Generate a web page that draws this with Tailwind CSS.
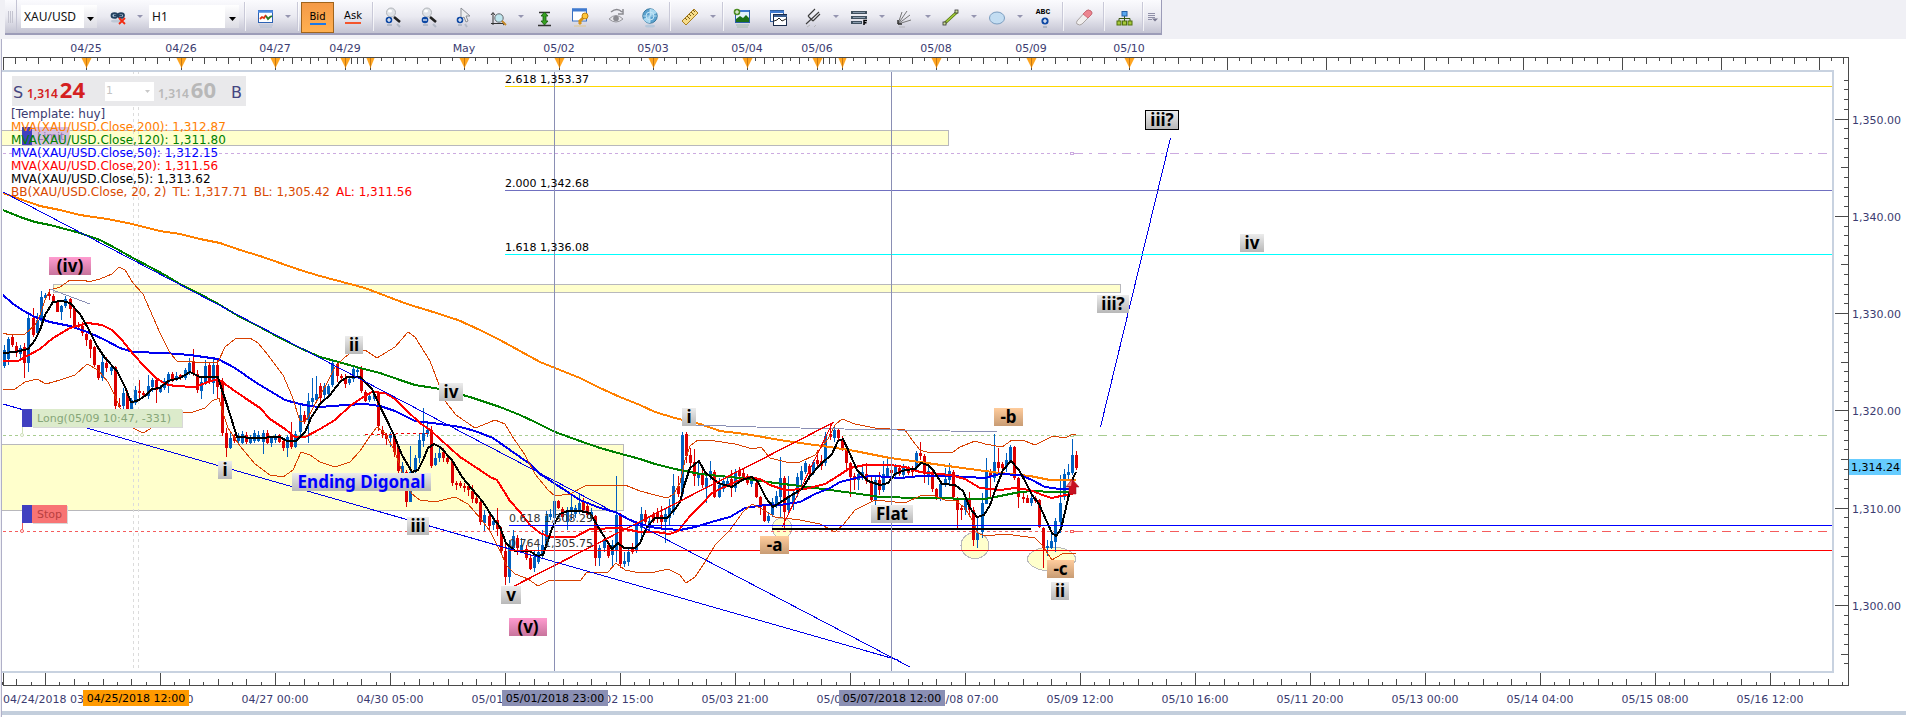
<!DOCTYPE html>
<html lang="en">
<head>
<meta charset="utf-8">
<title>XAU/USD H1</title>
<script src="https://cdn.jsdelivr.net/npm/@tailwindcss/browser@4"></script>
</head>
<body class="flex h-screen flex-col overflow-hidden bg-[#f0f0f5] font-['DejaVu_Sans',sans-serif] text-[11px] text-[#3b3b70]">

<header class="flex h-[39px] shrink-0 items-start pl-[5px]">
  <div class="flex h-[35px] items-stretch border-r border-b-2 border-[#9c9cb8] bg-linear-to-b from-[#fbfbfe] via-[#eaeaf1] to-[#c3c3d2]">
    <div class="flex w-3 items-center justify-center gap-px border-r border-[#c4c4d4]"><i class="h-3 w-px bg-[#c4c4d0]"></i><i class="h-3 w-px bg-[#c4c4d0]"></i><i class="h-3 w-px bg-[#c4c4d0]"></i></div>
    <div class="relative ml-1 mt-[5px] h-[23px] w-[76px] bg-white">
      <select aria-label="Symbol" class="h-full w-full appearance-none pl-[3px] font-['Noto_Sans',sans-serif] text-[12px] leading-[16px] text-[#111]"><option>XAU/USD</option></select>
      <span class="pointer-events-none absolute inset-y-0 right-0 flex w-[13px] items-center justify-center bg-linear-to-b from-white to-[#dcdce4]"><svg width="7" height="4" class="mt-1"><path d="M0 0h7L3.500 4z" fill="#000"/></svg></span>
    </div>
    <button aria-label="Unlink" class="ml-1 flex w-[34px] items-center justify-center"><svg width="24" height="24" viewBox="-12 -12 24 24" class="overflow-visible"><g fill="#a9c0d6" stroke="#23405f" stroke-width="1.800"><ellipse cx="-3.500" cy="-1.500" rx="3" ry="2.400"/><ellipse cx="3" cy="-1.500" rx="3" ry="2.400"/><path d="M-4-1.500h8" stroke="#23405f"/></g><ellipse cx="-2" cy="4" rx="5" ry="1.500" fill="#8fa4ba" opacity=".4"/><path d="M1 1l6 6M7 1L1 7" stroke="#f22a10" stroke-width="1.800"/></svg></button>
    <button aria-label="Unlink options" class="flex w-[10px] items-center justify-center"><svg width="6" height="3"><path d="M0 0h6L3 3z" fill="#9595b0"/></svg></button>
    <div class="relative ml-1 mt-[5px] h-[23px] w-[90px] bg-white">
      <select aria-label="Period" class="h-full w-full appearance-none pl-[3px] font-['Noto_Sans',sans-serif] text-[12px] leading-[16px] text-[#111]"><option>H1</option></select>
      <span class="pointer-events-none absolute inset-y-0 right-0 flex w-[14px] items-center justify-center bg-linear-to-b from-white to-[#dcdce4]"><svg width="7" height="4" class="mt-1"><path d="M0 0h7L3.500 4z" fill="#000"/></svg></span>
    </div>
    <div class="flex w-3 justify-center py-[2px]"><i class="w-px bg-[#c9c9d8]"></i><i class="w-px bg-white/70"></i></div>
    <button aria-label="Chart type" class="flex w-7 items-center justify-center"><svg width="24" height="24" viewBox="-12 -12 24 24" class="overflow-visible"><rect x="-6.500" y="-6.500" width="14" height="12" fill="#fff" stroke="#2c62b4"/><path d="M-7-5.500h15" stroke="#4a88e0" stroke-width="2.500"/><path d="M-5 2l2-2 2 1 2-3" fill="none" stroke="#e23010" stroke-width="1.800"/><path d="M1-1l2 3 2-2 2-1" fill="none" stroke="#2a7a2a" stroke-width="1.800"/><path d="M-6 8h14M-5 10h12" stroke="#8aa3c4" opacity=".4"/></svg></button>
    <button aria-label="Chart type options" class="flex w-[18px] items-center justify-center"><svg width="6" height="3"><path d="M0 0h6L3 3z" fill="#9595b0"/></svg></button>
    <div class="flex w-[2px] py-[2px]"><i class="w-px bg-[#c9c9d8]"></i><i class="w-px bg-white/70"></i></div>
    <button class="ml-[2px] mt-[2px] flex h-[31px] w-[33px] flex-col items-center justify-center border border-[#a0641c] bg-linear-to-b from-[#f49a48] to-[#ffb050] text-[10px] leading-[13px] text-black">Bid<i class="h-[2px] w-4 bg-[#1a78e8]"></i></button>
    <button class="flex w-[38px] flex-col items-center justify-center text-[10px] leading-[13px] text-black">Ask<i class="h-[2px] w-4 bg-[#f4552c]"></i></button>
    <div class="flex w-[2px] py-[2px]"><i class="w-px bg-[#c9c9d8]"></i><i class="w-px bg-white/70"></i></div>
    <button aria-label="Zoom in" class="flex w-[38px] items-center justify-center"><svg width="24" height="24" viewBox="-12 -12 24 24" class="overflow-visible"><path d="M1 0l6 5" stroke="#222" stroke-width="2.600"/><circle cx="-2" cy="-4.500" r="4.500" fill="#dfe2e6" stroke="#b0b4b9"/><ellipse cx="-3" cy="-6" rx="2" ry="1.500" fill="#fff"/><circle cx="-4" cy="3" r="3.300" fill="#0d48a4"/><path d="M-6 3h4M-4 1v4" stroke="#fff" stroke-width="1.200"/><path d="M-6 8h5M4 7l3 3" stroke="#789" stroke-width="2" opacity=".35"/></svg></button>
    <button aria-label="Zoom out" class="flex w-[34px] items-center justify-center"><svg width="24" height="24" viewBox="-12 -12 24 24" class="overflow-visible"><path d="M1 0l6 5" stroke="#222" stroke-width="2.600"/><circle cx="-2" cy="-4.500" r="4.500" fill="#dfe2e6" stroke="#b0b4b9"/><ellipse cx="-3" cy="-6" rx="2" ry="1.500" fill="#fff"/><circle cx="-4" cy="3" r="3.300" fill="#0d48a4"/><path d="M-6 3h4" stroke="#fff" stroke-width="1.200"/><path d="M-6 8h5M4 7l3 3" stroke="#789" stroke-width="2" opacity=".35"/></svg></button>
    <button aria-label="Cursor" class="flex w-[34px] items-center justify-center"><svg width="24" height="24" viewBox="-12 -12 24 24" class="overflow-visible"><path d="M-2-9V2l3-2 2 5 2-1-2-5h4z" fill="#eceef0" stroke="#8b8f95"/><circle cx="-3" cy="3" r="3.300" fill="#0d48a4"/><path d="M-5 3h4M-3 1v4" stroke="#fff" stroke-width="1.200"/><path d="M-5 8h4M2 7l2 3" stroke="#789" stroke-width="2" opacity=".35"/></svg></button>
    <button aria-label="Axis zoom" class="flex w-9 items-center justify-center"><svg width="24" height="24" viewBox="-12 -12 24 24" class="overflow-visible"><path d="M-5-4V8M-7-2l2-2.500 2 2.500M-7 6.500H7M5 5l2 1.500L5 8" stroke="#333" fill="none"/><circle cx="1" cy="1" r="4.200" fill="#bfe6ee" stroke="#64696d"/><path d="M4 4l4 4" stroke="#c88a28" stroke-width="1.800"/></svg></button>
    <button aria-label="Axis zoom options" class="flex w-[10px] items-center justify-center"><svg width="6" height="3"><path d="M0 0h6L3 3z" fill="#9595b0"/></svg></button>
    <button aria-label="Fit vertically" class="flex w-9 items-center justify-center"><svg width="24" height="24" viewBox="-12 -12 24 24" class="overflow-visible"><path d="M-5-4.500H6M-6 8.500H7" stroke="#333" stroke-width="1.500"/><path d="M.5-5l3.500 4H2v5h2L.5 8-3 4h2v-5h-2z" fill="#35a020" stroke="#145808" stroke-width=".8"/></svg></button>
    <button aria-label="Properties" class="flex w-9 items-center justify-center"><svg width="24" height="24" viewBox="-12 -12 24 24" class="overflow-visible"><rect x="-7.500" y="-8" width="14" height="12" fill="#fff" stroke="#376fc0"/><path d="M-8-7h15" stroke="#3f7ad0" stroke-width="3"/><path d="M-1 5l5-5M-1 5l2 2" stroke="#d99314" stroke-width="3"/><circle cx="5" cy="-1" r="3" fill="#ffc63a" stroke="#bb7f13"/><path d="M-6 9h12" stroke="#e0c890" stroke-width="2" opacity=".5"/></svg></button>
    <button aria-label="Show" class="flex w-9 items-center justify-center"><svg width="24" height="24" viewBox="-12 -12 24 24" class="overflow-visible"><path d="M-7 2Q0-5 7 2Q0 8-7 2z" fill="#e6e6ea" stroke="#96969c"/><circle cy="1.500" r="2.800" fill="#8a8a90"/><path d="M-5-5Q1-10 6-5M7-8v5H2" fill="none" stroke="#8a8a90" stroke-width="1.500"/></svg></button>
    <button aria-label="Radar" class="flex w-[30px] items-center justify-center"><svg width="24" height="24" viewBox="-12 -12 24 24" class="overflow-visible"><circle cx="1" cy="-1" r="7.200" fill="#5ba2cf" stroke="#34779f"/><path d="M1-1L8-4Q6-8 1-8zM1-1l-7 3Q-3 6 1 6z" fill="#a9d8f0"/><circle cx="1" cy="-1" r="4" fill="none" stroke="#c2e5f6"/><path d="M-6-1H8M1-8V6" stroke="#cdeaf8" stroke-width=".7"/><ellipse cx="1" cy="9" rx="5" ry="1.500" fill="#7fb2d0" opacity=".35"/></svg></button>
    <div class="flex w-3 justify-center py-[2px]"><i class="w-px bg-[#c9c9d8]"></i><i class="w-px bg-white/70"></i></div>
    <button aria-label="Measure" class="flex w-7 items-center justify-center"><svg width="24" height="24" viewBox="-12 -12 24 24" class="overflow-visible"><path d="M-8 4L4-8 8-4-4 8z" fill="#f6dc8a" stroke="#a87e20"/><path d="M-5 1l2 2M-3-1l3 3M-1-3l2 2M1-5l3 3M3-7l2 2" stroke="#7a5a12"/></svg></button>
    <button aria-label="Measure options" class="flex w-[18px] items-center justify-center"><svg width="6" height="3"><path d="M0 0h6L3 3z" fill="#9595b0"/></svg></button>
    <div class="flex w-[2px] py-[2px]"><i class="w-px bg-[#c9c9d8]"></i><i class="w-px bg-white/70"></i></div>
    <button aria-label="Add picture" class="flex w-9 items-center justify-center"><svg width="24" height="24" viewBox="-12 -12 24 24" class="overflow-visible"><rect x="-6.500" y="-6.500" width="14" height="12" fill="#e4f2fb" stroke="#2a5ea8"/><path d="M-6-6H7" stroke="#3f7ad0" stroke-width="2"/><path d="M-6 5V2l4-3 3 2 3-3 3 3v4z" fill="#1c7018"/><circle cx="-5" cy="-5" r="3.300" fill="#4b8c22"/><path d="M-7-5h4M-5-7v4" stroke="#fff"/><path d="M-6 8H7M-5 10H6" stroke="#7ba080" opacity=".5"/></svg></button>
    <button aria-label="Windows" class="flex w-[37px] items-center justify-center"><svg width="24" height="24" viewBox="-12 -12 24 24" class="overflow-visible"><rect x="-8.500" y="-6.500" width="13" height="11" fill="#f6f9ff" stroke="#2f5f9f"/><path d="M-9-5H5" stroke="#3f7ad0" stroke-width="2"/><rect x="-5.500" y="-2.500" width="13" height="11" fill="#fff" stroke="#1b2c4b"/><path d="M-5-1H8" stroke="#3b5f92" stroke-width="2"/><path d="M-5 4l3-1 2-2 3 3 4-2" fill="none" stroke="#222"/></svg></button>
    <button aria-label="Pitchfork" class="flex w-8 items-center justify-center"><svg width="24" height="24" viewBox="-12 -12 24 24" class="overflow-visible"><path d="M-7 7L6-5M-5-1l7-7M0 4l7-7M-5-1l5 5" stroke="#3c3c3c" stroke-width="1.100"/><path d="M-6 10l3-2M1 10l2-2" stroke="#999" opacity=".5"/></svg></button>
    <button aria-label="Pitchfork options" class="flex w-[14px] items-center justify-center"><svg width="6" height="3"><path d="M0 0h6L3 3z" fill="#9595b0"/></svg></button>
    <button aria-label="Fibonacci" class="flex w-8 items-center justify-center"><svg width="24" height="24" viewBox="-12 -12 24 24" class="overflow-visible"><path d="M-8-4.500H8M-8 .5H8M-8 5.500H3" stroke="#40505f" stroke-width="3"/><path d="M-6-4.500H6M-6 .5H6M-6 5.500H2" stroke="#8a9cae"/><path d="M5 8V3.500H8M5 5.700H7.500" fill="none" stroke="#000" stroke-width="1.500"/></svg></button>
    <button aria-label="Fibonacci options" class="flex w-[14px] items-center justify-center"><svg width="6" height="3"><path d="M0 0h6L3 3z" fill="#9595b0"/></svg></button>
    <button aria-label="Fan" class="flex w-8 items-center justify-center"><svg width="24" height="24" viewBox="-12 -12 24 24" class="overflow-visible"><path d="M-7 7L-3-5M-7 7L2-6M-7 7L5-2M-7 7L6 3" stroke="#6a6a6a" stroke-width=".9"/><path d="M-7 7V3M-7 7h4" stroke="#333" stroke-width="1.500"/><path d="M-6 10h6" stroke="#999" opacity=".5"/></svg></button>
    <button aria-label="Fan options" class="flex w-[14px] items-center justify-center"><svg width="6" height="3"><path d="M0 0h6L3 3z" fill="#9595b0"/></svg></button>
    <button aria-label="Line" class="flex w-8 items-center justify-center"><svg width="24" height="24" viewBox="-12 -12 24 24" class="overflow-visible"><path d="M-6 6L6-5" stroke="#527310" stroke-width="3"/><path d="M-6 6L6-5" stroke="#a6cf3a" stroke-width="1.400"/><rect x="-8" y="5" width="3" height="3" fill="#cfe39a" stroke="#333" stroke-width=".8"/><rect x="4" y="-7" width="3" height="3" fill="#cfe39a" stroke="#333" stroke-width=".8"/></svg></button>
    <button aria-label="Line options" class="flex w-[14px] items-center justify-center"><svg width="6" height="3"><path d="M0 0h6L3 3z" fill="#9595b0"/></svg></button>
    <button aria-label="Ellipse" class="flex w-8 items-center justify-center"><svg width="24" height="24" viewBox="-12 -12 24 24" class="overflow-visible"><ellipse cy="1" rx="7.500" ry="6" fill="#c3ddf2" stroke="#7a9dc0"/></svg></button>
    <button aria-label="Ellipse options" class="flex w-[14px] items-center justify-center"><svg width="6" height="3"><path d="M0 0h6L3 3z" fill="#9595b0"/></svg></button>
    <button class="flex w-8 flex-col items-center pt-[8px] font-['Liberation_Mono',monospace] text-[8px] font-bold leading-[8px] text-black">ABC<svg width="10" height="12" viewBox="-5 -5 10 12" class="ml-1"><circle r="3.600" fill="#0d48a4"/><path d="M-2 0h4M0-2v4" stroke="#fff" stroke-width="1.200"/><path d="M-2 6h4" stroke="#789" stroke-width="2" opacity=".4"/></svg></button>
    <div class="flex w-2 justify-center py-[2px]"><i class="w-px bg-[#c9c9d8]"></i><i class="w-px bg-white/70"></i></div>
    <button aria-label="Eraser" class="flex w-[34px] items-center justify-center"><svg width="24" height="24" viewBox="-12 -12 24 24" class="overflow-visible"><path d="M-7 4L2-6q2-2 5 0q2 2 0 4L-2 7q-2 2-5 0q-1-1 0-3z" fill="#f0eeee" stroke="#a9a3a3"/><path d="M-1-3l3-3q2-2 5 0q2 2 0 4L4 1z" fill="#ec8590" stroke="#c8606c" stroke-width=".8"/></svg></button>
    <div class="flex w-[6px] justify-center py-[2px]"><i class="w-px bg-[#c9c9d8]"></i><i class="w-px bg-white/70"></i></div>
    <button aria-label="Object tree" class="flex w-[34px] items-center justify-center"><svg width="24" height="24" viewBox="-12 -12 24 24" class="overflow-visible"><path d="M.5-1V6M-5 5V1.500H6V5" fill="none" stroke="#3b5a12"/><rect x="-2" y="-5.500" width="5" height="4.500" fill="#58a8f0" stroke="#2560a8"/><g fill="#a6c83a" stroke="#50700f"><rect x="-7" y="4" width="4" height="4"/><rect x="-1.500" y="4" width="4" height="4"/><rect x="4" y="4" width="4" height="4"/></g></svg></button>
    <div class="flex w-1 justify-center py-[2px]"><i class="w-px bg-[#c9c9d8]"></i><i class="w-px bg-white/70"></i></div>
    <button aria-label="More tools" class="flex w-4 items-center justify-center"><svg width="10" height="10"><path d="M0 1.500h7M0 3.500h7M0 5.500h7M0 7.500h4" stroke="#9090a8"/><path d="M4 6.500h6L7 9.500z" fill="#77778f"/></svg></button>
  </div>
</header>

<main class="grid min-h-0 flex-1 grid-cols-[minmax(0,1fr)_72px] grid-rows-[31px_minmax(0,1fr)_35px] border-l border-[#b0b0c8] bg-white ml-px">
  <svg id="dates" class="col-span-2 h-full w-full overflow-visible" role="img" aria-label="Session dates"></svg>

  <section class="relative z-10 overflow-hidden border-y-2 border-r-2 border-[#c8d2e0]" aria-label="Price chart">
    <svg id="plot" class="absolute inset-0 h-full w-full" role="img" aria-label="XAU/USD hourly candles"></svg>
    <div id="notes" class="font-['Noto_Sans',sans-serif] text-[17px] font-bold text-black"></div>
    <div class="absolute left-[10px] top-1 flex h-[30px] w-[234px] items-center bg-[#e8e8ea]/95">
      <button class="flex items-baseline pl-px font-['Noto_Sans',sans-serif] text-[12px] font-semibold leading-[30px] text-[#d42020]"><span class="w-[14px] text-left font-['DejaVu_Sans',sans-serif] text-[16px] font-normal text-[#454580]">S</span>1,314<span class="pl-[2px] text-[22px] font-bold">24</span></button>
      <span class="relative ml-auto mr-1 block h-[19px] w-[49px] bg-white">
        <select aria-label="Amount" class="h-full w-full appearance-none pl-px text-[11px] text-[#c4c4c4]"><option>1</option></select>
        <svg width="5" height="3" class="pointer-events-none absolute right-1 top-2"><path d="M0 0h5L2.500 3z" fill="#c8c8c8"/></svg>
      </span>
      <button class="flex w-[88px] items-baseline font-['Noto_Sans',sans-serif] text-[12px] font-semibold leading-[30px] text-[#b8b8b8]">1,314<span class="pl-[2px] text-[22px] font-bold">60</span><span class="ml-auto pr-1 font-['DejaVu_Sans',sans-serif] text-[16px] font-normal text-[#454580]">B</span></button>
    </div>
    <div class="absolute left-[9px] top-9 whitespace-nowrap text-[12px] leading-[13px]">
      <p>[Template: huy]</p>
      <p class="text-[#ff8000]">MVA(XAU/USD.Close,200): 1,312.87</p>
      <p class="text-[#008000]">MVA(XAU/USD.Close,120): 1,311.80</p>
      <p class="text-[#0000ff]">MVA(XAU/USD.Close,50): 1,312.15</p>
      <p class="text-[#ff0000]">MVA(XAU/USD.Close,20): 1,311.56</p>
      <p class="text-black">MVA(XAU/USD.Close,5): 1,313.62</p>
      <p class="flex gap-[6px] text-[#d84800]"><span>BB(XAU/USD.Close, 20, 2)</span><span>TL: 1,317.71</span><span>BL: 1,305.42</span><span class="text-[#ff0000]">AL: 1,311.56</span></p>
    </div>
  </section>

  <svg id="prices" class="h-full w-full overflow-visible" role="img" aria-label="Price scale"></svg>
  <svg id="times" class="col-span-2 h-full w-full overflow-visible" role="img" aria-label="Time scale"></svg>
</main>
<footer class="ml-px shrink-0 border-l border-[#b0b0c8] bg-white pt-[3px] pb-[2px]"><div class="h-1 bg-[#c3cedc]"></div></footer>

<script>
const DARK = '#4a4a4a';
const line = (x1, y1, x2, y2, c, extra = '') => `<line x1="${x1}" y1="${y1}" x2="${x2}" y2="${y2}" stroke="${c}" ${extra}/>`;
const text = (x, y, s, c, anchor = 'start') => `<text x="${x}" y="${y}" fill="${c}" text-anchor="${anchor}">${s}</text>`;
const crisp = s => `<g shape-rendering="crispEdges">${s}</g>`;

/* session dates over the plot */
{
  const days = [[86.5,'04/25'],[181.5,'04/26'],[275.5,'04/27'],[345.5,'04/29'],[370.5,''],[464.5,'May'],[559.5,'05/02'],[653.5,'05/03'],[747.5,'05/04'],[817.5,'05/06'],[842.5,''],[936.5,'05/08'],[1031.5,'05/09'],[1129.5,'05/10']];
  const marks = [-8, ...days.map(d => d[0]), 1227.5, 1326.5, 1424.5, 1523.5, 1622.5, 1721.5, 1819.5, 1918];
  let s = line(3, 57.5, 1849, 57.5, DARK) + line(3.5, 57, 3.5, 70, DARK), t = '';
  marks.forEach((a, k) => {
    if (a > 0 && a < 1848) s += line(a, 58, a, 70, DARK);
    const b = marks[k + 1], n = b - a < 40 ? 4 : 8;
    for (let j = 1; b && j < n; j++) {
      const x = Math.round(a + (b - a) * j / n) - .5;
      if (x > 5 && x < 1848) s += line(x, 58, x, j % 2 && n === 8 ? 61 : 64, DARK);
    }
  });
  for (const [x, label] of days) {
    const w = label ? 5 : 4;
    t += `<path d="M${x - w} 58h${2 * w}L${x} 68z" fill="#ffa520"/><path d="M${x} 58v10" stroke="#c87810"/>`;
    t += text(Math.floor(x), 52, label, '#3b3b70', 'middle');
  }
  document.getElementById('dates').innerHTML = `<g transform="translate(-2,-39)">${crisp(s)}${t}</g>`;
}

/* price scale */
{
  let s = line(1848.5, 57, 1848.5, 686, DARK), t = '';
  for (let k = -4; k <= 56; k++) {
    const y = Math.round(119.5 + k * 9.73) - .5;
    const major = k % 10 === 0, half = k % 5 === 0;
    s += line(major ? 1835 : half ? 1841 : 1844, y, 1848, y, DARK);
    if (major) t += text(1852, y + 4.5, '1,' + (350 - k) + '.00', '#3b3b70');
  }
  t += `<rect x="1849" y="459" width="52" height="16" fill="#66ccff"/>` + text(1851, 471, '1,314.24', '#000');
  document.getElementById('prices').innerHTML = `<g transform="translate(-1834,-70)">${crisp(s)}${t}</g>`;
}

/* time scale */
{
  const labels = ['04/24/2018 03:00','04/25 20:00','04/27 00:00','04/30 05:00','05/01 10:00','05/02 15:00','05/03 21:00','05/07 02:00','05/08 07:00','05/09 12:00','05/10 16:00','05/11 20:00','05/13 00:00','05/14 04:00','05/15 08:00','05/16 12:00'];
  let s = line(3, 685.5, 1849, 685.5, DARK) + line(3.5, 673, 3.5, 686, DARK), t = '';
  for (let k = -3; k < 126; k++) {
    const x = Math.round(45 + k * 14.375) + .5;
    if (x > 1847) break;
    s += line(x, k % 8 === 0 ? 673 : k % 2 ? 682 : 679, x, 685, DARK);
  }
  labels.forEach((l, k) => { t += k ? text(45 + k * 115, 703, l, '#3b3b70', 'middle') : text(3, 703, l, '#3b3b70'); });
  for (const [x, c, l] of [[83,'#ff9a00','04/25/2018 12:00'],[502,'#8a8fb4','05/01/2018 23:00'],[839,'#8a8fb4','05/07/2018 12:00']])
    t += `<rect x="${x}" y="690" width="106" height="16" fill="${c}"/>` + text(x + 53, 702, l, '#000', 'middle');
  document.getElementById('times').innerHTML = `<g transform="translate(-2,-673)">${crisp(s)}${t}</g>`;
}

/* plot */
const curves = [
  ['#ff8000', 2, '3,193 20,199 40,206 60,210 80,215 107,219 128,223 140,226 160,231 180,234 200,239 220,243 240,250 260,256 280,263 300,270 320,276 365,288 407,304 430,311 458,320 480,330 500,340 520,351 540,362 555,368 580,378 600,388 620,397 640,405 655,412 675,418 700,424 720,431 745,434 780,440 800,443 830,447 855,451 875,455 890,458 920,462 955,467 970,469 1000,473 1030,476 1050,480 1076,480'],
  ['#008000', 2, '3,210 20,217 35,222 50,225 80,233 100,240 117,249 133,258 150,267 165,275 180,284 200,294 220,305 240,317 260,327 280,338 300,348 320,357 335,361 360,368 380,373 400,380 415,385 440,389 470,397 500,407 520,415 535,422 555,432 580,441 600,448 625,455 640,459 655,464 675,469 700,474 720,476 740,478 775,483 800,486 830,490 860,494 880,497 920,498 985,499 1000,496 1020,492 1035,491 1050,492 1076,492'],
  ['#0000f0', 2, '3,295 12,303 22,310 35,317 50,322 70,326 90,333 105,340 120,348 133,352 165,353 190,355 218,359 235,368 255,382 275,394 285,400 300,404 310,406 320,407 345,405 365,404 380,406 395,411 415,421 440,424 460,427 475,431 493,438 510,450 530,464 540,474 560,487 580,500 600,508 615,512 630,520 650,527 665,529 680,530 695,527 715,521 730,517 745,508 765,505 780,505 800,502 815,494 830,488 840,482 860,477 875,476 900,478 920,476 950,476 985,478 1000,474 1020,475 1032,480 1045,487 1060,489 1076,489'],
  ['#ff0000', 2, '3,361 18,361 27,356 40,349 53,338 70,328 88,323 102,325 112,330 122,340 133,354 145,367 155,377 165,384 175,386 195,387 208,382 218,379 232,389 245,398 260,408 270,419 285,429 295,437 305,437 320,429 335,420 350,406 360,399 372,392 385,393 395,399 405,409 420,423 430,430 440,439 450,448 460,457 480,470 490,477 497,480 510,501 520,512 530,525 540,533 550,537 575,537 590,529 620,528 640,532 655,532 670,534 678,531 690,516 702,504 712,493 720,489 735,482 748,477 760,479 770,485 785,490 805,489 825,484 838,476 850,468 865,465 890,465 905,467 920,472 950,475 965,479 980,488 1000,490 1015,488 1030,490 1045,496 1052,498 1065,495 1076,493'],
  ['#000', 2, '3,353 15,352 28,349 35,340 40,330 45,315 53,302 62,301 70,303 80,314 88,328 97,346 105,358 117,371 125,387 131,402 137,401 145,396 152,389 160,388 168,381 180,378 190,372 200,377 218,377 222,390 228,408 237,437 255,438 280,437 287,441 296,441 305,432 311,418 320,404 330,395 340,382 347,377 360,377 372,389 378,402 393,433 402,455 412,472 418,470 423,460 428,448 434,444 440,447 452,460 462,477 472,489 483,502 493,518 500,527 506,543 515,551 530,551 537,556 543,555 547,543 553,526 560,514 568,511 580,511 590,513 597,525 605,538 612,549 618,543 624,548 635,548 640,543 647,527 655,518 667,518 675,509 680,502 684,486 690,468 699,461 705,472 718,483 732,487 742,480 752,477 758,482 766,498 773,507 781,502 790,496 802,489 810,476 820,465 832,454 838,441 843,439 850,454 857,470 868,481 880,485 888,483 895,474 905,470 915,469 921,463 928,465 933,470 942,484 955,485 963,491 970,508 977,517 984,515 990,505 996,488 1003,470 1011,461 1019,470 1026,483 1032,495 1039,504 1046,520 1052,533 1056,536 1061,529 1065,512 1070,490 1073,478 1076,472'],
  ['#d84000', 1, '3,333 10,335 25,334 35,325 40,315 45,300 50,290 60,287 70,280 85,280 88,282 100,279 112,274 119,267 125,270 133,283 143,294 150,310 160,333 170,353 177,361 195,362 218,362 225,347 235,339 250,338 258,343 268,355 283,375 292,396 300,421 305,422 312,410 320,395 327,383 335,367 345,357 355,350 365,350 377,358 385,353 395,347 408,332 415,337 430,361 438,382 445,401 456,415 475,428 483,425 495,420 505,424 512,436 525,455 535,474 548,490 555,496 570,494 585,486 600,485 625,485 640,491 655,495 667,498 674,494 680,483 685,460 690,446 698,440 715,441 735,444 753,449 761,447 770,458 790,463 800,462 815,455 828,439 835,425 842,419 855,424 875,428 905,430 912,440 920,450 930,453 953,452 960,447 975,441 985,444 1002,447 1012,440 1025,441 1035,445 1045,440 1053,436 1065,438 1073,434 1076,434'],
  ['#d84000', 1, '3,389 15,389 25,382 37,379 46,384 60,380 75,375 87,364 98,370 108,382 114,394 120,408 127,420 133,428 143,433 150,429 165,416 183,412 190,413 205,408 212,401 219,398 222,410 228,428 240,446 255,464 270,475 283,477 293,470 301,452 310,455 320,462 335,467 350,462 360,451 370,436 377,427 385,433 395,452 405,480 412,494 420,500 435,502 455,497 468,504 480,518 490,531 500,551 507,566 515,574 528,579 538,586 550,580 580,581 587,572 608,572 616,563 625,570 640,573 655,572 668,569 680,575 686,583 695,577 705,562 715,545 730,530 743,512 752,504 760,508 775,517 800,520 820,524 835,532 843,525 855,510 865,505 875,500 905,503 922,495 932,495 945,500 955,500 965,508 972,520 978,533 985,536 1005,534 1035,538 1042,545 1052,560 1062,554 1070,553 1076,553'],
];

/* candles: direction, high, body top, body bottom, low */
const candles = `u345,350,366,368 u337,339,359,365 d335,337,345,347 d342,346,353,357 u345,348,354,360 d343,347,363,378 u315,318,363,372 d308,318,335,337 u313,320,333,336 u291,297,321,323
u293,295,298,300 d289,294,296,300 d294,296,301,303 d301,302,312,312 u305,306,312,320 u296,299,306,308 d298,299,309,318 d307,308,326,328 d322,325,327,330 d322,326,333,336
d332,334,340,346 d339,340,349,358 d346,347,365,367 d365,365,378,380 u355,362,378,381 d357,363,368,372 u366,367,371,375 d366,367,406,409 d398,405,407,408 u388,393,406,409
d390,393,409,411 u398,400,409,411 u386,390,403,405 d380,391,393,398 d391,393,395,397 u375,386,396,399 u378,380,387,392 d379,380,390,403 u385,388,392,393 u378,381,388,390
u372,374,382,393 d372,374,380,382 u372,376,379,381 d374,375,378,380 u368,370,378,380 u358,363,372,375 d349,362,374,376 d370,374,390,393 u376,382,391,399 u360,366,383,385
d362,365,382,384 u358,365,383,394 d360,365,387,398 d378,381,433,436 d428,433,448,457 u431,438,448,449 d434,437,441,443 u433,436,441,443 u431,434,443,444 d432,435,442,444
u435,437,443,444 u430,433,441,443 u431,435,441,442 u430,433,442,454 d430,433,443,444 u436,437,443,447 u434,436,440,443 d434,435,442,443 d439,441,448,451 u435,437,448,457
d422,435,447,449 u431,434,447,448 u405,415,432,436 d411,415,421,424 u393,401,420,443 u378,398,402,407 u376,394,400,402 d383,386,398,402 u383,386,395,399 u384,386,394,396
u361,363,385,387 d361,364,376,382 d374,376,378,380 d374,379,384,388 u376,379,383,385 u366,369,379,382 u366,370,372,378 d366,368,391,393 d390,392,401,402 u392,396,400,402
u391,394,399,401 d391,393,426,431 d426,430,434,438 d433,435,439,445 u432,435,438,447 d434,437,452,457 d445,447,471,475 u462,466,474,481 d470,472,502,507 u446,472,502,502
u455,458,471,473 u433,440,458,463 u408,433,441,447 u421,430,434,437 d426,430,466,468 u453,458,465,466 u448,453,458,462 d448,452,458,462 d456,458,462,464 d459,461,483,486
d481,483,485,490 d481,483,486,488 d483,486,488,492 d484,486,490,496 d485,491,499,503 d495,498,503,504 d500,502,522,525 u510,515,523,531 d513,516,526,530 u516,521,525,530
d508,520,529,536 d527,531,551,555 d543,551,577,585 u540,547,577,583 u530,536,548,550 d535,538,548,555 u538,545,550,552 d545,549,558,560 d554,558,569,570 u550,557,568,572
u547,552,562,564 u530,545,554,558 u511,516,545,547 u509,514,517,520 u500,501,518,525 d500,501,508,509 d507,509,517,520 u507,511,522,530 u493,507,512,520 u505,508,514,518
u494,503,511,514 d498,502,510,512 d503,506,515,518 u508,512,518,521 d515,516,558,566 u545,548,558,566 u536,540,548,552 d541,545,556,558 u540,545,555,568 u476,515,551,562
d513,516,564,568 u552,561,564,567 u549,552,562,566 d543,547,552,554 u523,525,550,553 u507,514,528,538 d510,514,522,525 u518,521,526,530 d512,515,521,523 d508,512,518,523
d506,515,522,528 u508,514,522,543 u499,508,518,526 u474,486,512,515 d476,486,494,497 u432,435,494,497 d432,434,456,463 d448,455,463,470 d449,462,476,486 u462,474,478,486
d470,473,485,488 u475,478,488,503 u461,471,477,480 d470,472,497,498 u478,485,497,498 u475,481,489,492 u477,481,485,487 d470,479,488,497 u469,472,488,492 d467,470,476,480
d469,473,477,481 d474,476,483,485 u476,479,484,487 d480,483,497,498 d496,497,507,515 d504,505,521,522 u512,516,521,523 u498,502,515,517 u491,496,505,508 u457,478,497,517
d476,478,512,528 u476,497,510,515 u490,495,502,510 u473,477,494,497 u466,471,480,490 u461,463,472,474 d464,466,474,480 u460,462,472,475 d450,460,464,467 d455,461,466,470
u432,436,463,466 d423,434,437,440 u427,430,438,442 d428,430,438,440 d436,439,449,451 d448,450,463,472 d462,463,477,497 d473,476,480,490 u470,474,480,490 u466,472,476,480
d463,474,481,484 d477,482,500,502 u476,480,500,505 d472,480,490,495 u461,474,490,492 u459,468,476,478 d468,470,473,477 u464,467,475,477 d465,468,474,476 u464,467,475,477
d466,469,473,475 d466,468,472,477 u451,453,467,470 d442,453,456,460 d454,456,474,483 u467,471,476,485 d470,472,489,492 d488,489,499,500 u480,484,497,501 u468,479,484,487
u463,471,480,484 d470,472,497,500 d497,498,510,528 d506,508,510,520 u494,499,510,515 d492,500,510,517 d507,510,540,546 u518,533,540,548 u493,503,532,538 u458,471,504,504
d469,472,477,497 u434,462,478,482 d448,462,468,472 d462,464,468,470 u453,460,467,472 u445,447,461,463 d446,447,478,480 d477,478,497,508 d493,497,499,503 d495,498,503,503
u496,498,503,506 d496,498,501,503 d499,500,527,528 d527,528,548,568 u540,546,548,556 u532,541,548,549 u518,521,542,552 u475,503,522,533 u469,474,497,500 u464,472,475,480
u439,455,473,475 d451,455,468,470`.split(/\s+/);

{
  let s = '';
  for (const [x, y, w, h] of [[-2,130.5,950,15],[53.5,284.5,1067,8],[-2,444.5,625,66]])
    s += `<rect x="${x}" y="${y}" width="${w}" height="${h}" fill="#ffffcc" stroke="#b8b8bc"/>`;
  for (const [x, y, a, b] of [[782,528,10,10],[975,545.5,14,13],[1051.5,559,24,12]])
    s += `<ellipse cx="${x}" cy="${y}" rx="${a}" ry="${b}" fill="#ffffcc" stroke="#b8b8bc"/>`;
  for (const x of [133.5, 138.5]) s += line(x, 71, x, 672, '#dcdcdc', 'stroke-dasharray="3 3"');
  for (const [y, c] of [[153.5,'#ccaae0'],[435.5,'#a8cc90'],[531.5,'#f45c5c']]) {
    s += line(3, y, 1072, y, c, 'stroke-dasharray="3 3"') + line(1074, y, 1827, y, c, 'stroke-dasharray="9 6 3 6"');
    s += `<circle cx="1072" cy="${y}" r="1.500" fill="#fff" stroke="${c}"/>`;
  }
  candles.forEach((k, i) => {
    const [h, t, b, l] = k.slice(1).split(',').map(Number);
    const c = k[0] === 'u' ? '#0060c0' : '#dc0000', x = Math.floor(4.3 + i * 4.108);
    s += line(x + .5, h, x + .5, l, c) + `<rect x="${x - 1}" y="${t}" width="3" height="${Math.max(b - t, 1)}" fill="${c}"/>`;
  });
  for (const [c, w, p] of curves) s += `<polyline points="${p}" fill="none" stroke="${c}" stroke-width="${w}"/>`;
  s += line(3, 192, 910, 667, '#0000e8') + line(3, 404, 898, 660, '#0000e8') + line(1170.5, 138, 1100.5, 427, '#0000e8');
  s += `<polyline points="50,289 90,304" fill="none" stroke="#8a8fb4"/><polyline points="696,425 756,427 844,429 950,431 997,432" fill="none" stroke="#8a8fb4"/>`;
  s += `<path d="M506 590L834 422M507 590L831 424M782 527L833 422M830 423V440" stroke="#f00000" fill="none"/>`;
  s += line(365, 434.5, 428, 433.5, '#f00000', 'stroke-dasharray="3 3"');
  for (const [x, y, c] of [[505,86.5,'#ffd700'],[505,190.5,'#7070c0'],[505,254.5,'#00ffff'],[509,525.5,'#0000ff'],[509,550.5,'#ff0000']])
    s += `<line x1="${x}" y1="${y}" x2="101%" y2="${y}" stroke="${c}"/>`;
  s += line(772, 529, 1031, 529, '#000', 'stroke-width="2"');
  s += line(554.5, 71, 554.5, 672, '#8a8fb4') + line(891.5, 71, 891.5, 672, '#8a8fb4');
  let t = '';
  for (const [x, y, l, c] of [[505,83,'2.618 1,353.37','#000'],[505,187,'2.000 1,342.68','#000'],[505,251,'1.618 1,336.08','#000'],[509,522,'0.618 1,308.29','#333'],[509,547,'0.764 1,305.75','#333']]) t += text(x, y, l, c);
  for (const [y, w, bg, fg, l, o] of [[127,37,'#cdb2e4','#9a78b8','Limit',.8],[409,150,'#dcebcb','#86a678','Long(05/09 10:47, -331)',1],[505,35,'#f87474','#b84040','Stop',1]]) {
    t += `<g opacity="${o}"><rect x="33" y="${y + 1}" width="${w}" height="18" fill="#d8d8d8"/><rect x="32" y="${y}" width="${w}" height="18" fill="${bg}"/></g><rect x="22" y="${y}" width="10" height="18" fill="#4040c0"/>` + text(37, y + 13, l, fg);
  }
  t += '<path d="M22.500 427v6" stroke="#cde0b8"/><path d="M22.500 523v6" stroke="#f45c5c"/><circle cx="22" cy="435" r="1.500" fill="#fff" stroke="#cde0b8"/><circle cx="22" cy="531" r="1.500" fill="#fff" stroke="#f45c5c"/>';
  t += '<path d="M1072 479l7 8h-3v7h-7v-7h-3z" fill="#c81020" stroke="#901020" stroke-width=".5"/><path d="M1072 480l-5 6h4z" fill="#f08080"/>';
  document.getElementById('plot').innerHTML = `<g transform="translate(-2,-72)">${crisp(s)}${t}</g>`;
}

/* wave labels */
{
  const skin = {
    grey: 'absolute flex h-[18px] items-center justify-center whitespace-nowrap bg-linear-to-b from-[#ececec] to-[#b8b8b8]',
    pink: 'absolute flex h-[18px] items-center justify-center whitespace-nowrap bg-linear-to-b from-[#ff9cd0] to-[#c8749c]',
    tan: 'absolute flex h-[18px] items-center justify-center whitespace-nowrap bg-linear-to-b from-[#ffcc9c] to-[#c89c74]',
    blue: 'absolute flex h-[18px] items-center justify-center whitespace-nowrap bg-linear-to-b from-[#ececec] to-[#b8b8b8] text-[#0000ff]',
    box: 'absolute flex h-5 items-center justify-center whitespace-nowrap border border-black bg-linear-to-b from-[#ececec] to-[#b8b8b8]',
  };
  const notes = [[49,257,42,'(iv)','pink'],[218,461,14,'i','grey'],[345,336,18,'ii','grey'],[439,383,24,'iv','grey'],[292,473,139,'Ending Digonal','blue'],[407,517,22,'iii','grey'],[501,586,20,'v','grey'],[509,618,38,'(v)','pink'],[682,408,14,'i','grey'],[760,536,29,'-a','tan'],[871,505,42,'Flat','grey'],[994,408,29,'-b','tan'],[1047,560,27,'-c','tan'],[1051,582,18,'ii','grey'],[1145,110,34,'iii?','box'],[1240,234,24,'iv','grey'],[1097,295,32,'iii?','grey']];
  document.getElementById('notes').innerHTML = notes.map(([x, y, w, l, k]) => `<div class="${skin[k]}" style="left:${x - 2}px;top:${y - 72}px;width:${w}px">${l}</div>`).join('');
}
</script>
</body>
</html>
